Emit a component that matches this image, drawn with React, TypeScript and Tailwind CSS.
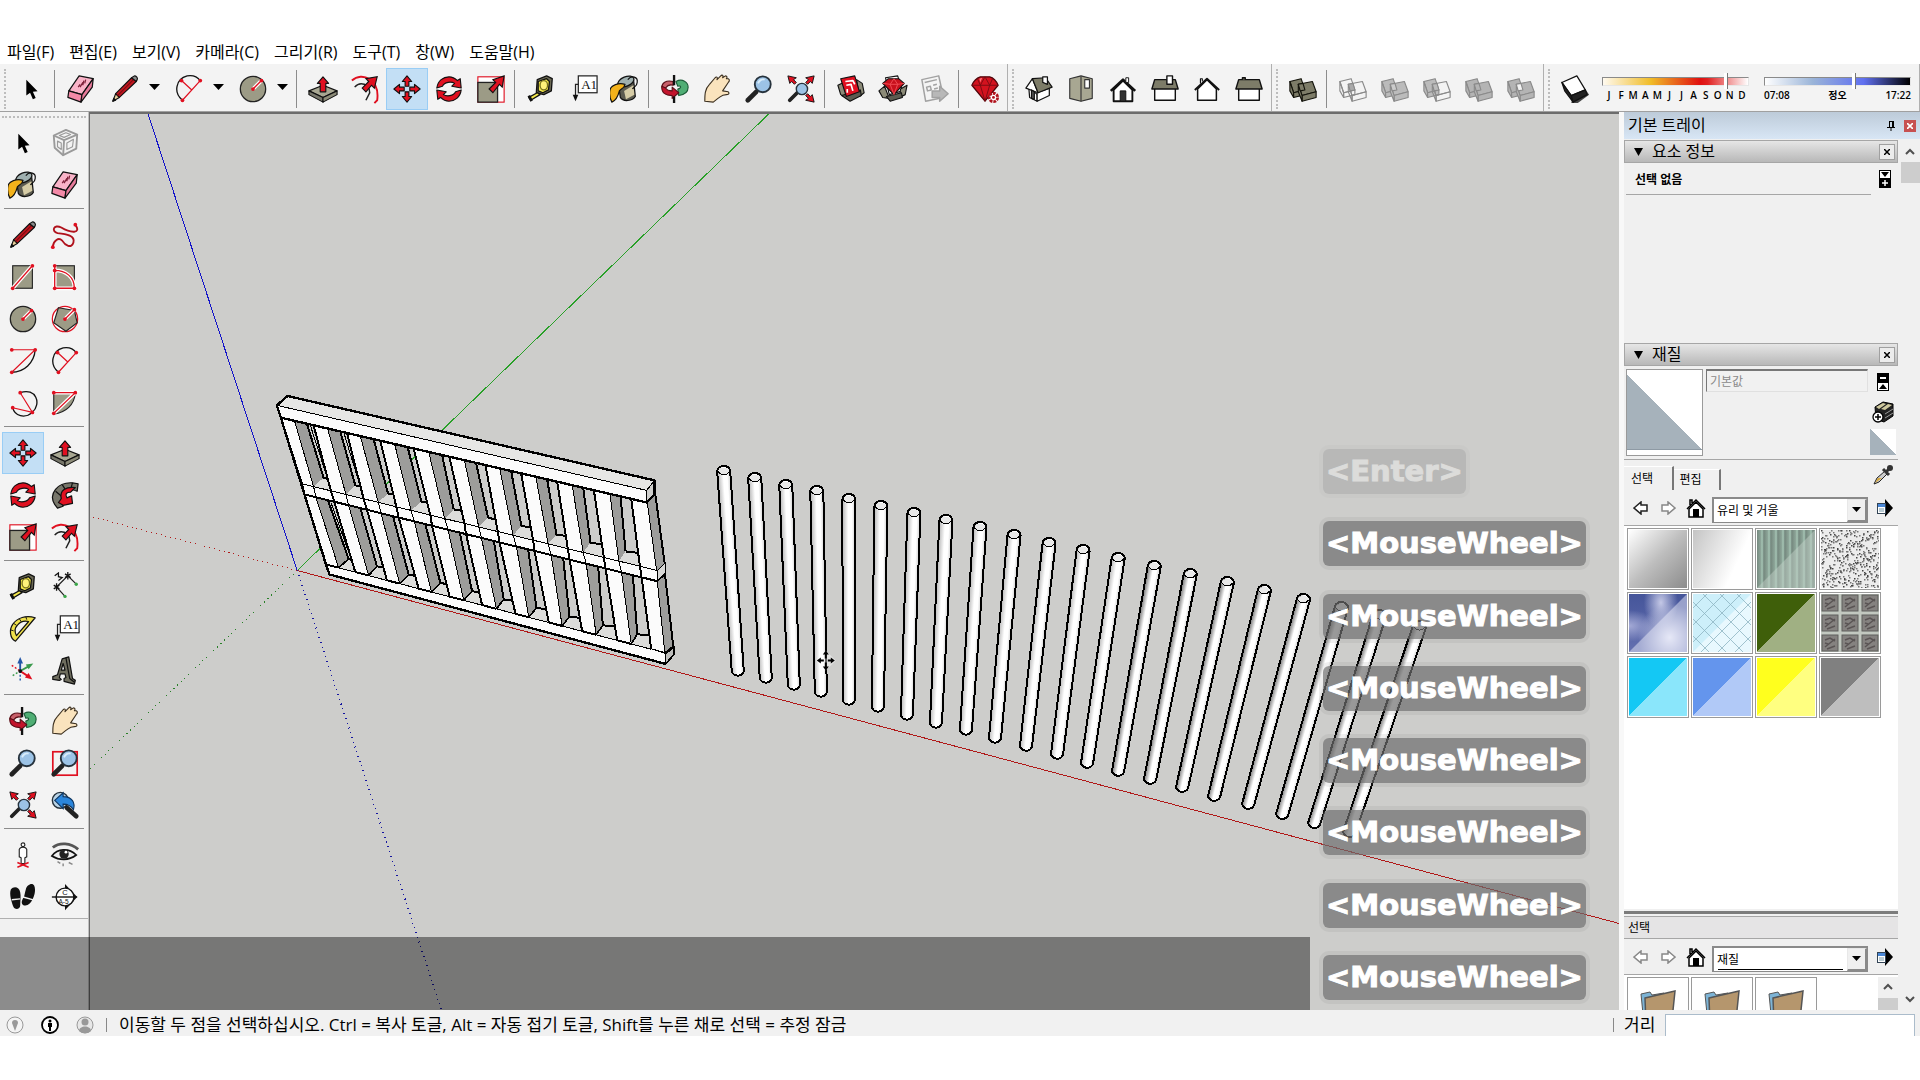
import { useState, type ReactNode } from "react";
import clsx from "clsx";

const RED = "#e01020";
const OLIVE = "#9c9b86";

const ROTATE_ARROW = "M3 15C4 7 10 3 16 3C20 3 23 5 25 7L28 5L29 15L19 13L22 10C19 8 11 8 9 13Z";
const MOVE_ARROW = "M16 2L21 8H18V13H14V8H11Z";

function Dots({ points }: { points: number[][] }) {
  return (
    <>
      {points.map(([x, y]) => (
        <circle key={`${x}-${y}`} cx={x} cy={y} r="2" fill={RED} />
      ))}
    </>
  );
}

function Lens({ small = false }: { small?: boolean }) {
  return small ? (
    <>
      <path d="M4 28L12 20" stroke="#222" strokeWidth="4" strokeLinecap="round" />
      <circle cx="17" cy="16" r="6" fill="#9cc3e6" stroke="#26323c" strokeWidth="1.5" />
    </>
  ) : (
    <>
      <path d="M4 28L13 19" stroke="#222" strokeWidth="5" strokeLinecap="round" />
      <circle cx="20" cy="11" r="8.5" fill="#9cc3e6" stroke="#26323c" strokeWidth="2" />
      <path d="M15 10C16 7 19 5 22 6" fill="none" stroke="#d8ecfa" strokeWidth="2" />
    </>
  );
}

function Solid({ a, b, c, wireA, wireB }: { a: string; b: string; c: string; wireA?: boolean; wireB?: boolean }) {
  const stroke = a === "#7d7c68" ? "#14140c" : "#8a8a8a";
  return (
    <g stroke={stroke} strokeWidth="1.2" strokeLinejoin="round">
      <path d="M2 8L14 5L18 17L6 20Z" fill={wireA ? "none" : a} />
      <path d="M2 8L6 20V25L2 18Z" fill={wireA ? "none" : a} />
      <path d="M6 20L18 17V22L6 25Z" fill={wireA ? "none" : a} />
      <path d="M11 11L26 8L30 19L15 23Z" fill={wireB ? "none" : b} />
      <path d="M15 23L30 19V25L15 29Z" fill={wireB ? "none" : b} />
      <path d="M11 11L15 23V29L11 19Z" fill={wireB ? "none" : b} />
      <path d="M11 11L16 10L18 17L13 18Z" fill={c} />
    </g>
  );
}

const ICONS: Record<string, ReactNode> = {
  select: <path d="M11 6V23L15 20L18 27L21 25.500L18 19L23 18.500Z" fill="#000" />,
  component: (
    <g fill="none" stroke="#9a9a9a" strokeWidth="2" strokeLinejoin="round">
      <path d="M4 8L17 2L29 7L28 22L14 29L5 21Z" />
      <path d="M4 8L15 13L29 7M15 13L14 29" />
      <path d="M8 14L12 16V23L8 20ZM18 16L25 12L24 20L18 23ZM10 8L17 5L22 7L15 10Z" strokeWidth="1.2" />
    </g>
  ),
  paint: (
    <g stroke="#111" strokeWidth="1.3" strokeLinejoin="round">
      <path d="M9 10L11 25C14 30 24 29 27 24L25 5Z" fill="#5c5b50" />
      <path d="M15 18L25 12L26 22L17 27Z" fill="#d6cca6" stroke="none" />
      <ellipse cx="17" cy="8" rx="9" ry="5" transform="rotate(-22 17 8)" fill="#9fb0b0" />
      <path d="M19 6C23 1 30 3 29 9C29 13 25 14 24 16" fill="none" />
      <path d="M16 11C9 9 1 12 0 17C-1 21 0 26 2 30C7 28 9 22 10 18C12 15 15 16 16 11Z" fill="#f3b21b" />
    </g>
  ),
  eraser: (
    <g stroke="#111" strokeWidth="1.3" strokeLinejoin="round">
      <path d="M14 2L29 5L17 22L3 18Z" fill="#f9b3c8" />
      <path d="M3 18L17 22L16 30L2 25Z" fill="#f48aa8" />
      <path d="M17 22L29 5L28 14L16 30Z" fill="#e77a9a" />
      <path d="M13 14L15 11M15 14L18 9M18 12L19 7M20 10L21 6" stroke="#7c2038" />
    </g>
  ),
  pencil: (
    <g stroke="#111" strokeWidth="1.2" strokeLinejoin="round">
      <path d="M3 29L6 21L10 25Z" fill="#e8cf9a" />
      <path d="M6 21L23 4L28 8L10 25Z" fill="#c2161f" />
      <path d="M8 23L25 6" stroke="#7a0c12" />
      <path d="M23 4L26 2C28 2 30 4 29 6L28 8Z" fill="#8a8a8a" />
      <path d="M3 29L4 26L6 28Z" fill="#111" />
    </g>
  ),
  arc: (
    <>
      <path d="M9 28C-1 20 2 5 14 2C20 1 25 3 28 7" fill="none" stroke="#111" strokeWidth="1.4" />
      <path d="M8 7L19 17M28 7L9 28" stroke={RED} strokeWidth="1.3" />
      <Dots points={[[8, 7], [28, 7], [9, 28]]} />
    </>
  ),
  circle: (
    <>
      <circle cx="16" cy="16" r="13.500" fill={OLIVE} stroke="#222" strokeWidth="1.400" />
      <path d="M16 16L25 7" stroke="#fff" strokeWidth="4" />
      <path d="M16 16L25 7" stroke={RED} strokeWidth="1.400" />
      <Dots points={[[16, 16], [25, 7]]} />
    </>
  ),
  freehand: (
    <>
      <path d="M27 5C34 15 22 14 12 8C4 4 1 12 8 14C18 15 27 17 25 24C23 31 16 27 13 22C9 18 4 22 3 28" fill="none" stroke="#b0121c" strokeWidth="2" />
      <Dots points={[[27, 5], [3, 29]]} />
    </>
  ),
  rectangle: (
    <>
      <rect x="5" y="4" width="21" height="24" fill={OLIVE} stroke="#222" strokeWidth="1.200" />
      <path d="M5 28L26 4" stroke="#fff" strokeWidth="4" />
      <path d="M5 28L26 4" stroke={RED} strokeWidth="1.400" />
      <Dots points={[[5, 28], [26, 4]]} />
    </>
  ),
  rotatedRect: (
    <>
      <rect x="5" y="4" width="21" height="24" fill={OLIVE} stroke="#222" strokeWidth="1.200" />
      <path d="M5 9C17 9 26 16 26 28H5V4" fill="none" stroke="#fff" strokeWidth="4" />
      <path d="M5 9C17 9 26 16 26 28H5V4" fill="none" stroke={RED} strokeWidth="1.400" />
      <Dots points={[[5, 4], [5, 9], [5, 28], [26, 28]]} />
    </>
  ),
  polygon: (
    <>
      <circle cx="16" cy="16" r="13.500" fill="#fff" stroke={RED} strokeWidth="1.300" />
      <path d="M9 4L26 7L29 20L17 29L4 20Z" fill={OLIVE} stroke="#222" strokeWidth="1.200" />
      <path d="M16 16L26 6" stroke="#fff" strokeWidth="4" />
      <path d="M16 16L26 6" stroke={RED} strokeWidth="1.400" />
      <Dots points={[[16, 16], [26, 6]]} />
    </>
  ),
  arcCenter: (
    <>
      <path d="M29 4C28 18 17 28 4 28" fill="none" stroke="#111" strokeWidth="1.400" />
      <path d="M4 4H29L4 28" fill="none" stroke={RED} strokeWidth="1.200" />
      <Dots points={[[4, 4], [29, 4], [4, 28]]} />
    </>
  ),
  arc3: (
    <>
      <path d="M13 5C30 -1 36 17 26 26C18 33 7 30 5 21" fill="none" stroke="#111" strokeWidth="1.400" />
      <path d="M13 5L26 26L5 21" fill="none" stroke={RED} strokeWidth="1.200" />
      <Dots points={[[13, 5], [5, 21], [26, 26]]} />
    </>
  ),
  pie: (
    <>
      <path d="M4 5H27C26 18 17 26 4 28Z" fill={OLIVE} stroke="#222" strokeWidth="1.200" />
      <path d="M4 5H27L4 27" fill="none" stroke="#fff" strokeWidth="4" />
      <path d="M4 5H27L4 27" fill="none" stroke={RED} strokeWidth="1.300" />
      <Dots points={[[4, 5], [27, 5], [4, 27]]} />
    </>
  ),
  move: (
    <g fill={RED} stroke="#111" strokeWidth="1.200" strokeLinejoin="round">
      <path d={MOVE_ARROW} />
      <path d={MOVE_ARROW} transform="rotate(90 16 16)" />
      <path d={MOVE_ARROW} transform="rotate(180 16 16)" />
      <path d={MOVE_ARROW} transform="rotate(270 16 16)" />
    </g>
  ),
  pushPull: (
    <g stroke="#111" strokeWidth="1.200" strokeLinejoin="round">
      <path d="M1 18L16 12L31 18L16 25Z" fill="#a8a792" />
      <path d="M1 18L16 25V30L1 22Z" fill="#77766a" />
      <path d="M16 25L31 18V22L16 30Z" fill="#8c8b78" />
      <path d="M16 3L22 10H19V19H13V10H10Z" fill={RED} />
    </g>
  ),
  rotate: (
    <g fill={RED} stroke="#111" strokeWidth="1.200" strokeLinejoin="round">
      <path d={ROTATE_ARROW} />
      <path d={ROTATE_ARROW} transform="rotate(180 16 16)" />
    </g>
  ),
  followMe: (
    <g stroke="#111" strokeWidth="1.300" strokeLinejoin="round">
      <path d="M5 26C-2 15 8 2 24 3L30 4L29 12C20 8 12 12 12 22L14 28L8 30Z" fill="#77766a" />
      <path d="M6 12L12 17M13 5L17 11M24 3L22 10" />
      <path d="M12 20C10 11 17 7 27 8L22 13C17 13 16 15 18 19L23 17L24 25L14 27L9 24Z" fill={RED} />
    </g>
  ),
  scale: (
    <>
      <rect x="2" y="3" width="28" height="27" fill="#fff" stroke={RED} strokeWidth="1.200" />
      <rect x="2" y="9" width="21" height="21" fill={OLIVE} stroke="#222" strokeWidth="1.400" />
      <path d="M14 16L21 9L18 6L30 2L28 14L25 11L18 20Z" fill={RED} stroke="#111" strokeWidth="1.200" />
    </>
  ),
  offset: (
    <>
      <path d="M2 7C13 -3 32 6 29 28L26 31" fill="none" stroke={RED} strokeWidth="2" />
      <path d="M5 14C11 7 21 11 21 20L17 28" fill="none" stroke="#222" strokeWidth="1.600" />
      <path d="M13 15L20 8L17 5L29 3L26 15L23 12L17 19Z" fill={RED} stroke="#111" strokeWidth="1.200" />
    </>
  ),
  tape: (
    <g stroke="#111" strokeWidth="1.400" strokeLinejoin="round">
      <path d="M12 6L22 2L28 5L27 18L19 22L11 20Z" fill="#6c6a55" />
      <path d="M13 8L22 5L25 8L24 17L18 20L13 18Z" fill="#f4e84a" />
      <ellipse cx="19" cy="12" rx="4" ry="5" fill="#fff27a" stroke="#77711f" />
      <path d="M12 20L15 22L5 28L3 25Z" fill="#f4e84a" />
      <path d="M3 23L6 29" strokeWidth="3" />
    </g>
  ),
  dimension: (
    <>
      <path d="M7 16L19 4M7 16L16 26M19 4L28 13" stroke="#222" strokeWidth="1.200" />
      <path d="M4 14L10 18M4 18L10 14M7 12V20M16 2L22 6M16 6L22 2M19 0V8" stroke="#111" strokeWidth="1.400" />
      <path d="M5 4L9 1L9 5L13 6L9 9" fill="none" stroke="#111" strokeWidth="1.300" />
      <circle cx="16" cy="26" r="1.800" fill="#3aa648" />
      <circle cx="28" cy="13" r="1.800" fill="#3aa648" />
    </>
  ),
  protractor: (
    <g stroke="#111" strokeWidth="1.300" strokeLinejoin="round">
      <path d="M29 4L8 29C2 26 1 17 5 11C10 4 19 1 29 4Z" fill="#efe04c" />
      <path d="M22 8L9 23C7 19 7 15 10 12C13 8 18 7 22 8Z" fill="#f3f3f3" />
      <path d="M3 17L6 18M6 10L9 12M12 5L14 8M19 3L20 6" strokeWidth="1" />
    </g>
  ),
  text: (
    <>
      <rect x="11" y="2" width="20" height="18" fill="#fff" stroke="#222" strokeWidth="1.300" />
      <text x="14" y="16" fontSize="14" fontFamily="Liberation Serif" fill="#111">A1</text>
      <path d="M11 11H8V24" fill="none" stroke="#222" strokeWidth="1.300" />
      <path d="M5 22H11L8 29Z" fill="#111" />
    </>
  ),
  axes: (
    <>
      <path d="M13 16V27" stroke="#2356a8" strokeWidth="1.500" strokeDasharray="2 2" />
      <path d="M4 10L13 16" stroke={RED} strokeWidth="1.500" strokeDasharray="2 2" />
      <path d="M5 21L13 16" stroke="#3a9a4c" strokeWidth="1.500" strokeDasharray="2 2" />
      <path d="M13 16V5" stroke="#2356a8" strokeWidth="2" />
      <path d="M13 16L22 11" stroke="#3a9a4c" strokeWidth="2" />
      <path d="M13 16L22 22" stroke={RED} strokeWidth="2" />
      <path d="M13 1L16 8H10Z" fill="#2356a8" />
      <path d="M27 8L22 14L19 9Z" fill="#3a9a4c" />
      <path d="M26 25L18 23L22 18Z" fill={RED} />
      <circle cx="13" cy="16" r="2" fill="#111" />
    </>
  ),
  text3d: (
    <g stroke="#111" strokeWidth="1.300" strokeLinejoin="round">
      <path d="M3 22L8 20L13 3L20 1L24 24L27 26L26 30L15 27L15 24L17 23L16 19L11 19L10 23L12 25L10 26L3 25Z" fill="#6f6e5f" />
      <path d="M12 15H16L14 8Z" fill="#efefef" />
      <path d="M17 2L21 24L26 28" fill="none" />
    </g>
  ),
  orbit: (
    <g strokeLinejoin="round">
      <path d="M17 8C24 4 30 9 30 14C30 19 26 22 20 23L19 16C23 15 23 12 19 13Z" fill="#4fae74" stroke="#1c5c38" strokeWidth="1.200" />
      <path d="M14 8C6 6 2 10 2 14L6 15C8 12 11 11 14 12Z" fill="#c8606a" stroke="#5a1018" strokeWidth="1.200" />
      <path d="M2 13C1 20 6 23 13 23V26L20 20L13 14V18C9 18 7 17 6 15Z" fill="#c3142c" stroke="#5a1018" strokeWidth="1.200" />
      <path d="M15 1V12M15 24V31" stroke="#111" strokeWidth="2.500" />
    </g>
  ),
  pan: (
    <path
      d="M3 29C3 22 3 16 8 11L14 4C16 2 17 4 16 6L20 2C22 0 23 2 22 4L25 2C27 2 27 4 26 5L28 5C30 6 29 8 28 9L22 18L28 19C30 21 28 22 26 22C21 22 20 24 17 26L12 30Z"
      fill="#fae3bd"
      stroke="#3c3020"
      strokeWidth="1.200"
      strokeLinejoin="round"
    />
  ),
  zoom: <Lens />,
  zoomWindow: (
    <>
      <rect x="3" y="4" width="26" height="25" fill="none" stroke={RED} strokeWidth="1.800" />
      <Lens />
    </>
  ),
  zoomExtents: (
    <>
      <g fill={RED} stroke="#111" strokeWidth="1">
        <path d="M2 2L11 4L8 6L11 9L9 11L6 8L4 10Z" />
        <path d="M30 2L28 10L26 8L23 11L21 9L24 6L21 4Z" />
        <path d="M30 30L21 28L24 26L21 23L23 21L26 24L28 22Z" />
      </g>
      <Lens small />
    </>
  ),
  previous: (
    <>
      <circle cx="11" cy="11" r="8.500" fill="#b9d3e6" stroke="#26323c" strokeWidth="1.500" />
      <path d="M5 11L14 3V7C24 7 27 14 25 21C22 16 19 15 14 15V20Z" fill="#2b86dc" stroke="#0e3560" strokeWidth="1.200" />
      <path d="M18 19L28 28" stroke="#222" strokeWidth="5" strokeLinecap="round" />
    </>
  ),
  positionCamera: (
    <>
      <circle cx="16" cy="5" r="2" fill="#fff" stroke="#222" strokeWidth="1.200" />
      <path d="M12 10C13 7 19 7 20 10V18L18 19V25H14V19L12 18Z" fill="#fff" stroke="#222" strokeWidth="1.200" />
      <path d="M10 24L22 29M22 24L10 29" stroke={RED} strokeWidth="1.600" />
    </>
  ),
  lookAround: (
    <>
      <path d="M3 8C10 2 22 3 30 10" fill="none" stroke="#555" strokeWidth="3" />
      <path d="M2 17C8 9 20 8 28 16C20 22 10 22 2 17Z" fill="#eee" stroke="#111" strokeWidth="1.800" />
      <circle cx="15" cy="15" r="5" fill="#222" />
      <circle cx="17" cy="13" r="1.500" fill="#fff" />
      <path d="M8 23L11 25M14 25V28M20 24L24 26" stroke="#888" strokeWidth="1.500" />
    </>
  ),
  walk: (
    <>
      <g fill="#111">
        <path d="M3 8C6 4 12 5 13 11C14 15 13 21 13 25C13 29 8 30 6 27C4 22 1 13 3 8Z" />
        <path d="M19 8C20 3 26 0 28 4C30 9 28 15 26 19C24 23 21 26 17 25C13 23 15 19 17 16C18 13 18 11 19 8Z" />
      </g>
      <path d="M4 19L13 18M16 16L27 19" stroke="#f3f3f3" strokeWidth="1.500" />
    </>
  ),
  section: (
    <>
      <path d="M16 2L29 16L16 30Z" fill="#111" />
      <circle cx="16" cy="16" r="9.500" fill="#fff" stroke="#111" strokeWidth="1.500" />
      <path d="M2 16H29" stroke="#111" strokeWidth="1.500" />
      <text x="13" y="14" fontSize="8" fontFamily="Liberation Sans" fill="#111">C</text>
      <text x="9" y="23" fontSize="7" fontFamily="Liberation Sans" fill="#111">A-5</text>
    </>
  ),
  warehouse: (
    <g stroke="#111" strokeWidth="1.200" strokeLinejoin="round">
      <path d="M2 12L8 9L12 26L5 22Z" fill="#8c8b78" />
      <path d="M22 6L28 10L30 20L25 24Z" fill="#8c8b78" />
      <path d="M6 23L26 17L27 23L15 29Z" fill="#5c5b50" />
      <path d="M5 5L20 2L25 19L11 24Z" fill={RED} />
      <path d="M10 8L18 7L20 11M11 12L16 11L18 18M12 16V20" fill="none" stroke="#fff" strokeWidth="1.800" />
    </g>
  ),
  extension: (
    <g stroke="#111" strokeWidth="1.200" strokeLinejoin="round">
      <path d="M8 4L21 2L26 18L12 22Z" fill="#fff" />
      <path d="M1 18L7 13L12 26L5 25Z" fill="#8c8b78" />
      <path d="M24 16L31 12L29 22L23 25Z" fill="#8c8b78" />
      <path d="M9 24L25 20L26 25L13 29Z" fill="#5c5b50" />
      <path d="M5 10L11 5H22L28 10L17 22Z" fill="#c8101c" />
      <path d="M5 10L13 11L17 22L21 11L28 10M13 11L17 5L21 11Z" fill="none" stroke="#f04c54" strokeWidth="1" />
    </g>
  ),
  layout: (
    <g stroke="#a2a2a2" strokeWidth="1.600" strokeLinejoin="round">
      <path d="M2 6L20 2L25 25L6 29Z" fill="#f4f4f4" />
      <path d="M5 9L18 6M7 14L11 13L12 17L8 18ZM14 12L18 11M15 16L19 15" fill="none" />
      <path d="M13 18H21V13L30 21L21 29V25H13Z" fill="#b8b8b8" />
    </g>
  ),
  ruby: (
    <>
      <g strokeLinejoin="round">
        <path d="M2 12C4 7 8 4 11 3H21C25 4 28 7 30 12L16 29Z" fill="#d3121e" stroke="#4d050a" strokeWidth="1.300" />
        <path d="M2 12H30M8 5L11 12L16 29L21 12L24 5M11 12L16 3L21 12" fill="none" stroke="#7a0c12" strokeWidth="1" />
        <path d="M10 5L13 4L11 9Z" fill="#ff7378" />
      </g>
      <circle cx="25" cy="25" r="4.500" fill="#fff" stroke="#b0121c" strokeWidth="3" strokeDasharray="3 1" />
      <circle cx="25" cy="25" r="1.500" fill="#b0121c" />
    </>
  ),
  iso: (
    <g stroke="#111" strokeWidth="1.300" strokeLinejoin="round">
      <path d="M5 13L14 22V29L6 25Z" fill="#fff" />
      <path d="M14 20L27 15V23L14 29Z" fill="#fff" />
      <path d="M2 15L9 5L15 20Z" fill="#fff" />
      <path d="M9 5L23 4L30 14L15 20Z" fill="#7d7c68" />
      <path d="M20 3H25V11L20 9Z" fill="#fff" />
      <path d="M8 17L11 19V27L8 26Z" fill="#555" />
    </g>
  ),
  top: (
    <g stroke="#333" strokeWidth="1.200" strokeLinejoin="round">
      <path d="M4 5L16 2L28 5V26L16 29L4 26Z" fill="#a8a792" />
      <path d="M16 3V29" />
      <rect x="20" y="6" width="5" height="9" fill="#fff" />
    </g>
  ),
  front: (
    <g stroke="#111" strokeLinejoin="round">
      <path d="M6 17V29H26V17L16 7Z" fill="#fff" strokeWidth="2" />
      <path d="M3 18L16 6L29 18" fill="none" strokeWidth="2.800" />
      <rect x="13" y="18" width="6" height="11" fill="#333" />
      <rect x="19" y="4" width="3" height="5" fill="#fff" />
    </g>
  ),
  right: (
    <g stroke="#111" strokeWidth="1.500" strokeLinejoin="round">
      <rect x="5" y="15" width="22" height="13" fill="#fff" />
      <path d="M5 6H27L30 16H2Z" fill="#7d7c68" />
      <rect x="18" y="2" width="6" height="9" fill="#fff" />
    </g>
  ),
  back: (
    <g stroke="#111" strokeLinejoin="round">
      <path d="M6 16V28H26V16L16 6Z" fill="#fff" strokeWidth="1.600" />
      <path d="M3 17L16 5L29 17" fill="none" strokeWidth="2" />
      <path d="M9 10V5H11V8" fill="#fff" strokeWidth="1.200" />
    </g>
  ),
  left: (
    <g stroke="#111" strokeWidth="1.500" strokeLinejoin="round">
      <rect x="5" y="15" width="22" height="13" fill="#fff" />
      <path d="M5 6H27L30 16H2Z" fill="#7d7c68" />
      <path d="M9 6V4H12V6" fill="#7d7c68" />
    </g>
  ),
  outerShell: <Solid a="#7d7c68" b="#7d7c68" c="#7d7c68" />,
  intersect: <Solid a="#f3f3f3" b="#f3f3f3" c="#aaa" wireA wireB />,
  union: <Solid a="#bbb" b="#bbb" c="#ccc" />,
  subtract: <Solid a="#bbb" b="#f3f3f3" c="#bbb" wireB />,
  trim: <Solid a="#b4b4b4" b="#b4b4b4" c="#b4b4b4" />,
  split: <Solid a="#b4b4b4" b="#b4b4b4" c="#f3f3f3" />,
  shadow: (
    <g stroke="#111" strokeLinejoin="round" strokeWidth="1.300">
      <path d="M12 31L19 31L31 22L27 16L14 24Z" fill="#444" stroke="none" />
      <path d="M2 9L18 2L27 17L12 23Z" fill="#fff" />
      <path d="M2 9L12 23L14 30L5 18Z" fill="#222" />
      <path d="M12 23L27 17L29 22L14 30Z" fill="#222" />
    </g>
  ),
};

function Icon({ name }: { name: string }) {
  return (
    <svg viewBox="0 0 32 32" className="size-[30px]" aria-hidden="true">
      {ICONS[name]}
    </svg>
  );
}

interface ToolButtonProps {
  name: string;
  active?: boolean;
  onSelect?: (name: string) => void;
}

function ToolButton({ name, active, onSelect }: ToolButtonProps) {
  return (
    <button
      type="button"
      aria-label={name}
      aria-pressed={active}
      onClick={() => onSelect?.(name)}
      className={clsx(
        "flex h-[42px] w-[42px] shrink-0 items-center justify-center border",
        active ? "border-[#99cdf5] bg-[#c3dff5]" : "border-transparent"
      )}
    >
      <Icon name={name} />
    </button>
  );
}

function DropTool({ name, onSelect }: ToolButtonProps) {
  return (
    <div className="flex shrink-0 items-center pr-1 pl-0.5">
      <ToolButton name={name} onSelect={onSelect} />
      <button type="button" aria-label={`${name} options`} className="flex h-[42px] w-4 items-center justify-center pb-1">
        <svg viewBox="0 0 11 6" className="h-1.5 w-[11px]" aria-hidden="true">
          <path d="M0 0H11L5.500 6Z" />
        </svg>
      </button>
    </div>
  );
}

function Separator() {
  return <div className="ml-0.5 mr-[5px] h-[38px] w-px shrink-0 bg-[#8c8c8c]" />;
}

function Toolbar({ children, last = false }: { children: ReactNode; last?: boolean }) {
  return (
    <div className={clsx("flex h-full items-center border-r border-[#b0b0b0] pt-0.5", last ? "flex-1" : "pr-px")}>
      <div className="flex h-full w-2.5 shrink-0 items-center justify-center">
        <div className="h-10 border-l-2 border-dotted border-[#bdbdbd]" />
      </div>
      {children}
    </div>
  );
}

const MENUS = ["파일(F)", "편집(E)", "보기(V)", "카메라(C)", "그리기(R)", "도구(T)", "창(W)", "도움말(H)"];

const TOOL_GROUPS = [
  ["pushPull", "offset", "move", "rotate", "scale"],
  ["tape", "text", "paint"],
  ["orbit", "pan", "zoom", "zoomExtents"],
  ["warehouse", "extension", "layout"],
  ["ruby"],
];

const SIDE_GROUPS = [
  ["select", "component", "paint", "eraser"],
  ["pencil", "freehand", "rectangle", "rotatedRect", "circle", "polygon", "arcCenter", "arc", "arc3", "pie"],
  ["move", "pushPull", "rotate", "followMe", "scale", "offset"],
  ["tape", "dimension", "protractor", "text", "axes", "text3d"],
  ["orbit", "pan", "zoom", "zoomWindow", "zoomExtents", "previous"],
  ["positionCamera", "lookAround", "walk", "section"],
];

const SLIDER =
  "h-[9px] w-full appearance-none border border-[#e6e6e6] border-t-[#8a8a8a] border-l-[#8a8a8a] [&::-webkit-slider-thumb]:h-4 [&::-webkit-slider-thumb]:w-1 [&::-webkit-slider-thumb]:appearance-none [&::-webkit-slider-thumb]:border-r [&::-webkit-slider-thumb]:border-[#777] [&::-webkit-slider-thumb]:bg-white";

function ShadowSliders() {
  return (
    <div className="flex flex-1 gap-[15px] pr-2 pl-1.5">
      <div className="flex flex-1 flex-col">
        <input
          type="range"
          aria-label="month"
          defaultValue={86}
          className={clsx(SLIDER, "bg-[linear-gradient(90deg,#fffaf0,#f0bc28_33%,#e01010_67%,#e02020_72%,#fff)]")}
        />
        <div className="flex justify-between px-0.5 pt-[3px] text-[10px] leading-3 font-semibold">
          {"JFMAMJJASOND".split("").map((m, i) => (
            <span key={i} className="w-2.5 text-center">
              {m}
            </span>
          ))}
        </div>
      </div>
      <div className="flex flex-1 flex-col">
        <input
          type="range"
          aria-label="time"
          defaultValue={62}
          className={clsx(SLIDER, "bg-[linear-gradient(90deg,#fff,#9ab4d8_33%,#6070f0_68%,#000)]")}
        />
        <div className="flex justify-between pt-[3px] text-[10px] leading-3 font-semibold">
          <span>07:08</span>
          <span>정오</span>
          <span>17:22</span>
        </div>
      </div>
    </div>
  );
}

/* ---------- Model ---------- */

// Picket x positions where they meet each rail, in fence space (3 units per pixel).
const UPPER = [
  [62, 103, 140, 125, 160, 190],
  [160, 202, 240, 212, 257, 285],
  [260, 300, 340, 310, 354, 383],
  [360, 403, 442, 408, 452, 483],
  [460, 505, 545, 510, 553, 580],
  [567, 612, 647, 612, 655, 683],
  [675, 718, 752, 712, 758, 783],
  [782, 826, 860, 818, 863, 888],
  [890, 935, 968, 922, 968, 990],
  [1000, 1048, 1080, 1030, 1075, 1095],
  [1112, 1160, 1184, 1138, 1188, 1213],
];
const LOWER = [
  [133, 167, 203, 198, 235, 265],
  [222, 265, 300, 285, 325, 350],
  [320, 362, 398, 380, 418, 445],
  [415, 462, 495, 475, 513, 540],
  [515, 563, 598, 568, 610, 635],
  [617, 663, 700, 665, 708, 730],
  [717, 768, 803, 765, 805, 828],
  [822, 872, 908, 865, 905, 927],
  [927, 977, 1013, 965, 1007, 1027],
  [1035, 1083, 1117, 1070, 1112, 1130],
  [1143, 1190, 1213, 1172, 1213, 1238],
];

const railTop = (x: number) => 112 + 0.2317 * (x - 62);
const midTop = (x: number) => 310 + 0.2441 * (x - 125);
const midBottom = (x: number) => 342 + 0.246 * (x - 133);
const baseTop = (x: number) => 552 + 0.2606 * (x - 198);

interface PicketProps {
  xs: number[];
  next?: number[];
  top: (x: number) => number;
  bottom: (x: number) => number;
  foot?: boolean;
}

function Picket({ xs, next, top, bottom, foot }: PicketProps) {
  const [a, b, c, d, e, f] = xs;
  const fy = bottom(f) - 34;
  return (
    <g>
      {next && (
        <>
          <path d={`M${e} ${bottom(e)}L${f} ${fy}L${next[3] - 8} ${fy + 4}L${next[3]} ${bottom(next[3])}Z`} fill="#dcdcda" />
          <path d={`M${f} ${fy}L${next[3] - 8} ${fy + 4}`} stroke="#000" strokeWidth="6" />
        </>
      )}
      <path d={`M${b} ${top(b)}L${c} ${top(c)}L${f} ${fy}L${e} ${bottom(e)}Z`} fill="#9d9d9b" />
      <path d={`M${a} ${top(a)}L${b} ${top(b)}L${e} ${bottom(e)}L${d} ${bottom(d)}Z`} fill="#fbfbfb" />
      <path d={`M${b} ${top(b)}L${e} ${bottom(e)}`} stroke="#000" strokeWidth="3" />
      <path d={`M${c} ${top(c)}L${f} ${fy}M${a} ${top(a)}L${d} ${bottom(d)}`} stroke="#000" strokeWidth="6" />
      {foot && <path d={`M${d} ${bottom(d)}L${e} ${bottom(e)}L${f} ${fy}`} fill="none" stroke="#000" strokeWidth="5" />}
    </g>
  );
}

function Fence() {
  return (
    <g transform="translate(261 381) scale(.3333)" strokeLinejoin="round">
      {UPPER.slice(0, 10).map((xs, i) => (
        <Picket key={i} xs={xs} next={UPPER[i + 1]} top={railTop} bottom={midTop} />
      ))}
      <path d="M1112 355L1160 366L1188 570L1138 558Z" fill="#fbfbfb" />
      <path d="M1160 366L1184 340L1213 548L1188 570Z" fill="#9d9d9b" />
      <path d="M1112 355L1138 558M1184 340L1213 555" stroke="#000" strokeWidth="6" />
      <path d="M1160 366L1188 570" stroke="#000" strokeWidth="3" />
      {LOWER.slice(0, 10).map((xs, i) => (
        <Picket key={i} xs={xs} next={LOWER[i + 1]} top={midBottom} bottom={baseTop} foot />
      ))}
      <path d="M1143 590L1190 602L1213 818L1172 806Z" fill="#fbfbfb" />
      <path d="M1190 602L1213 580L1238 800L1213 818Z" fill="#9d9d9b" />
      <path d="M1143 590L1172 806L1213 818L1238 798L1213 580" fill="none" stroke="#000" strokeWidth="6" />
      <path d="M1190 602L1213 818" stroke="#000" strokeWidth="3" />
      {/* slivers of the back edges seen between the first pickets */}
      <path d="M150 134L201 292M251 158L298 312M212 366L272 534" stroke="#000" strokeWidth="3" />

      <path d="M125 310L1190 570V602L133 342Z" fill="#fbfbfb" stroke="#000" strokeWidth="3" />
      <path d="M1190 570L1213 548L1215 580L1190 602Z" fill="#d8d8d6" stroke="#000" strokeWidth="3" />
      <path d="M133 342L1190 602L1213 580" fill="none" stroke="#000" strokeWidth="6" />
      {UPPER.slice(0, 11).map((xs, i) => (
        <path key={i} d={`M${xs[3]} ${midTop(xs[3])}L${LOWER[i][0]} ${midBottom(LOWER[i][0])}`} stroke="#000" strokeWidth="6" />
      ))}
      {UPPER.slice(0, 10).map((xs, i) => (
        <path key={i} d={`M${xs[4]} ${midTop(xs[4])}L${LOWER[i][1]} ${midBottom(LOWER[i][1])}`} stroke="#000" strokeWidth="3" />
      ))}

      <path d="M198 555L235 562L1172 806L1215 820V850L208 582Z" fill="#fbfbfb" />
      <path d="M235 562L1172 806" stroke="#000" strokeWidth="3" />
      <path d="M1215 820L1240 798V822L1215 850Z" fill="#bdbdbb" stroke="#000" strokeWidth="5" />
      <path d="M62 112L198 555L208 582L1215 850" fill="none" stroke="#000" strokeWidth="7" />
      {LOWER.slice(0, 10).map(([, , , d, e], i) => (
        <path key={i} d={`M${d} ${baseTop(d)}L${e} ${baseTop(e)}`} stroke="#000" strokeWidth="6" />
      ))}

      <path d="M50 75L82 47L1182 300L1158 330Z" fill="#e6e6e4" stroke="#000" strokeWidth="3" />
      <path d="M50 75L1158 330V366L62 112Z" fill="#fbfbfb" stroke="#000" strokeWidth="3" />
      <path d="M1158 330L1182 300L1184 340L1158 366Z" fill="#cfcfcd" stroke="#000" strokeWidth="3" />
      <path d="M1184 340L1158 366L62 112L50 75L82 47L1182 300V340" fill="none" stroke="#000" strokeWidth="7" />
    </g>
  );
}

// [top x, top y, bottom x, bottom y]
const POLES = [
  [724, 472, 738, 671], [755, 479, 766, 678], [786, 486, 794, 685], [817, 492, 821, 692], [849, 500, 849, 700],
  [881, 507, 878, 707], [914, 514, 907, 715], [946, 521, 936, 723], [980, 528, 966, 730], [1014, 536, 995, 738],
  [1049, 544, 1026, 746], [1083, 551, 1057, 754], [1118, 559, 1087, 763], [1154, 567, 1118, 771], [1190, 575, 1150, 779],
  [1227, 583, 1182, 787], [1264, 591, 1214, 796], [1303, 600, 1248, 804], [1341, 608, 1282, 814], [1379, 616, 1314, 823],
  [1419, 627, 1349, 832],
];

function Pole({ pole, index }: { pole: number[]; index: number }) {
  const [x1, y1, x2, y2] = pole;
  const len = Math.hypot(x2 - x1, y2 - y1);
  const nx = (y2 - y1) / len;
  const ny = -(x2 - x1) / len;
  const shade = index > 12 ? "#7c7c7c" : "#bdbdbd";
  return (
    <g stroke="#000">
      <linearGradient id={`pole${index}`} gradientUnits="userSpaceOnUse" x1={x1 - nx * 6} y1={y1 - ny * 6} x2={x1 + nx * 6} y2={y1 + ny * 6}>
        <stop offset="0" stopColor={shade} />
        <stop offset=".45" stopColor="#fff" />
        <stop offset=".75" stopColor="#fff" />
        <stop offset="1" stopColor="#d4d4d4" />
      </linearGradient>
      <path
        d={`M${x1 - nx * 6.5} ${y1 - ny * 6.5}A6.500 5.500 0 0 1 ${x1 + nx * 6.5} ${y1 + ny * 6.5}L${x2 + nx * 6} ${y2 + ny * 6}A6 5 0 0 1 ${x2 - nx * 6} ${y2 - ny * 6}Z`}
        fill={`url(#pole${index})`}
        strokeWidth="2"
      />
      <ellipse cx={x1} cy={y1} rx="5.500" ry="3.500" fill="#e8e8e8" stroke="none" />
      <path d={`M${x1 - 6} ${y1}Q${x1} ${y1 + 7} ${x1 + 6} ${y1}`} fill="none" strokeWidth="1" />
    </g>
  );
}

function Model() {
  return (
    <svg viewBox="91 115 1528 895" preserveAspectRatio="xMinYMin slice" className="absolute inset-0 size-full" shapeRendering="crispEdges" aria-label="모델">
      <path d="M148 112L298 571" stroke="#1414c8" />
      <path d="M772 112L298 571" stroke="#28a028" />
      <path d="M298 571L1620 924" stroke="#b01818" />
      <g strokeDasharray="1 4">
        <path d="M298 571L442 1010" stroke="#1414a0" strokeWidth="1.500" />
        <path d="M298 571L88 772" stroke="#288028" />
        <path d="M298 571L88 516" stroke="#b01818" />
      </g>
      <Fence />
      {POLES.map((pole, i) => (
        <Pole key={i} pole={pole} index={i} />
      ))}
      <g transform="translate(826 661)" shapeRendering="auto">
        <path d="M0 -10L10 0L0 10L-10 0Z" fill="#fff" opacity=".4" />
        <path d="M0 -10L3 -6H1V-2H-1V-6H-3ZM0 10L3 6H1V2H-1V6H-3ZM-9 0L-5 -3V-1H-2V1H-5V3ZM9 0L5 -3V-1H2V1H5V3Z" fill="#000" />
      </g>
    </svg>
  );
}

const KEYS = ["<Enter>", ...Array<string>(7).fill("<MouseWheel>")];

function KeyOverlay() {
  return (
    <div className="absolute bottom-2.5 left-[1233px] flex h-[551px] flex-col items-start justify-between">
      {KEYS.map((key, i) => (
        <kbd
          key={i}
          className={clsx(
            "flex h-[45px] items-center rounded-md bg-[#6e6e6e]/70 px-[3px] font-['DejaVu_Sans',sans-serif] text-[29px] leading-none font-bold text-white shadow-[0_0_0_4px_rgba(120,120,120,0.12)] [-webkit-text-stroke:1px_white]",
            i === 0 && "opacity-30"
          )}
        >
          {key}
        </kbd>
      ))}
    </div>
  );
}

/* ---------- Tray ---------- */

function SectionHeader({ title }: { title: string }) {
  return (
    <div className="flex h-[23px] shrink-0 items-center border border-[#a6a6a6] bg-linear-to-b from-[#e6e6e6] to-[#b8b8b8] pr-0.5 pl-[9px]">
      <svg viewBox="0 0 9 8" className="h-2 w-[9px]" aria-hidden="true">
        <path d="M0 0H9L4.500 8Z" />
      </svg>
      <h2 className="flex-1 pb-0.5 pl-[9px] text-base leading-5">{title}</h2>
      <button type="button" aria-label={`${title} 닫기`} className="flex size-4 items-center justify-center border border-[#a0a0a0] bg-[#ececec]">
        <svg viewBox="0 0 6 6" className="size-1.5" aria-hidden="true">
          <path d="M0 0L6 6M6 0L0 6" stroke="#000" strokeWidth="1.500" />
        </svg>
      </button>
    </div>
  );
}

function ToggleIcon({ open }: { open?: boolean }) {
  return (
    <svg viewBox="0 0 12 18" className="h-[18px] w-3" aria-hidden="true">
      <rect x=".5" y=".5" width="11" height="17" fill="#fff" stroke="#000" />
      {open ? (
        <path d="M0 0H12V10H0ZM3 4V6H9V4ZM6 11L10 16H2Z" fillRule="evenodd" />
      ) : (
        <>
          <path d="M2 2H10L6 7ZM0 8H12V18H0Z" />
          <path d="M6 10V16M3 13H9" stroke="#fff" strokeWidth="1.500" />
        </>
      )}
    </svg>
  );
}

function NavRow({ label, options, dim }: { label: string; options: string[]; dim?: boolean }) {
  return (
    <div className="flex h-9 shrink-0 items-center border-b border-[#a6a6a6] pl-[9px]">
      <button type="button" aria-label="뒤로" className="w-[27px]">
        <svg viewBox="0 0 16 14" className="h-3.5 w-4" aria-hidden="true">
          <path d="M1 7L8 1V4H14V10H8V13Z" fill="#fff" stroke={dim ? "#888" : "#222"} strokeWidth="1.500" />
        </svg>
      </button>
      <button type="button" aria-label="앞으로" className="w-[26px]">
        <svg viewBox="0 0 16 14" className="h-3.5 w-4" aria-hidden="true">
          <path d="M15 7L8 1V4H2V10H8V13Z" fill="#fff" stroke="#888" strokeWidth="1.500" />
        </svg>
      </button>
      <button type="button" aria-label="홈" className="w-[26px]">
        <svg viewBox="0 0 20 20" className="size-5" aria-hidden="true">
          <path d="M3 11V19H17V11L10 4Z" fill="#fff" stroke="#000" strokeWidth="1.500" />
          <path d="M1 11L10 2L19 11M4 7V2H6V5" fill="none" stroke="#000" strokeWidth="1.500" />
          <rect x="7" y="11" width="6" height="8" />
        </svg>
      </button>
      <div className="relative mt-1 h-[26px] w-[156px]">
        <select
          aria-label={label}
          className="size-full appearance-none border border-t-2 border-l-2 border-[#8a8a8a] bg-white pl-[3px] text-xs"
        >
          {options.map(o => (
            <option key={o}>{o}</option>
          ))}
        </select>
        {dim && <div className="pointer-events-none absolute bottom-0.5 left-1.5 h-px w-[125px] bg-black" />}
        <div className="pointer-events-none absolute top-0.5 right-px bottom-px flex w-5 items-center justify-center border border-r-2 border-b-2 border-[#8a8a8a] border-t-[#e8e8e8] border-l-[#e8e8e8] bg-[#f0f0f0]">
          <svg viewBox="0 0 9 5" className="h-[5px] w-[9px]" aria-hidden="true">
            <path d="M0 0H9L4.500 5Z" />
          </svg>
        </div>
      </div>
      <button type="button" aria-label="세부 정보" className="pl-2">
        <svg viewBox="0 0 18 18" className="size-[18px]" aria-hidden="true">
          <path d="M6 5H9V0L17 9L9 18V13H6Z" />
          <rect x="1.500" y="4.500" width="8" height="10" fill="#fff" stroke="#345" />
          <rect x="2" y="5" width="7" height="3" fill="#4a88d8" />
          <path d="M3 10H8M3 12H8" stroke="#79a" />
        </svg>
      </button>
    </div>
  );
}

// Deterministic speckles for the textured swatches.
const SPECKLES = Array.from({ length: 420 }, (_, i) => [(i * 37 + ((i * i) % 13) * 5) % 58, (i * 23 + ((i * i) % 17) * 7) % 58]);

const MATERIALS: { name: string; fill: string; art?: ReactNode }[] = [
  { name: "회색 반투명", fill: "bg-[linear-gradient(135deg,#fff,#bdbdbd_50%,#8c8c8c)]" },
  { name: "투명", fill: "bg-[linear-gradient(115deg,#c4c4c4,#fff_70%)]" },
  {
    name: "골판 유리",
    fill: "bg-[repeating-linear-gradient(90deg,#76897f_0px,#8fa89b_4px,#a9c9b8_5px,#70827a_7px)]",
    art: <path d="M58 0V58H0Z" fill="#c6d2ca" opacity=".45" />,
  },
  {
    name: "얼룩 유리",
    fill: "bg-[#ececec]",
    art: SPECKLES.map(([x, y], i) => <rect key={i} x={x} y={y} width="1.500" height="1.500" fill={i % 3 ? "#777" : "#444"} />),
  },
  {
    name: "하늘 반사",
    fill: "bg-[radial-gradient(ellipse_at_55%_15%,#c4c8e6,transparent_38%),radial-gradient(ellipse_at_0%_55%,#a4aad6,transparent_35%),radial-gradient(ellipse_at_70%_75%,#e4e6f6,transparent_55%),linear-gradient(#45559a,#6470b0)]",
    art: <path d="M58 0V58H0Z" fill="#e8eaf8" opacity=".5" />,
  },
  {
    name: "다이아몬드 유리",
    fill: "bg-[#cdeffa]",
    art: (
      <>
        <path d="M58 0V58H0Z" fill="#e8f8fe" />
        <path d="M-2 16L16 -2M-2 33L33 -2M-2 50L50 -2M6 60L60 6M23 60L60 23M40 60L60 40M42 -2L60 16M25 -2L60 33M8 -2L60 50M-2 6L52 60M-2 23L35 60M-2 40L18 60" stroke="#8db4c2" strokeWidth=".800" />
      </>
    ),
  },
  { name: "녹색 유리", fill: "bg-[linear-gradient(135deg,#3f5f0a_50%,#a0b083_50%)]" },
  {
    name: "유리 블록",
    fill: "bg-[#c2c8c0]",
    art: [0, 1, 2].flatMap(r =>
      [0, 1, 2].map(c => (
        <g key={`${r}${c}`} transform={`translate(${c * 20 + 1} ${r * 20 + 1})`}>
          <rect width="16" height="16" fill="#858280" stroke="#5f5f5c" />
          <path d="M3 5L8 3L13 6M3 12L8 8L13 4M5 14L13 11M3 8L6 9" fill="none" stroke="#5a5454" strokeWidth="1.500" />
        </g>
      ))
    ),
  },
  { name: "하늘색", fill: "bg-[linear-gradient(135deg,#14c8f4_50%,#8ae6fb_50%)]" },
  { name: "파랑", fill: "bg-[linear-gradient(135deg,#6495ed_50%,#b1c9f7_50%)]" },
  { name: "노랑", fill: "bg-[linear-gradient(135deg,#ffff1e_50%,#ffff80_50%)]" },
  { name: "회색", fill: "bg-[linear-gradient(135deg,#808080_50%,#bebebe_50%)]" },
];

function Tray() {
  return (
    <aside className="flex w-[301px] shrink-0 flex-col border-l-[5px] border-[#f8f8f8] bg-[#f0f0f0]">
      <div className="flex h-[27px] shrink-0 items-center bg-linear-to-b from-[#bdcbd9] to-[#d8e6f5] pr-1 pl-1">
        <h1 className="flex-1 pb-0.5 text-base leading-5">기본 트레이</h1>
        <button type="button" aria-label="고정" className="mr-[9px]">
          <svg viewBox="0 0 8 10" className="h-2.5 w-2" aria-hidden="true">
            <path d="M2 0H7V6H8V7H4.500V10H3.500V7H0V6H2ZM3 1V6H5V1Z" fillRule="evenodd" />
          </svg>
        </button>
        <button type="button" aria-label="닫기" className="flex size-3 items-center justify-center bg-[#c75050]">
          <svg viewBox="0 0 6 6" className="size-1.5" aria-hidden="true">
            <path d="M0 0L6 6M6 0L0 6" stroke="#fff" strokeWidth="1.600" />
          </svg>
        </button>
      </div>

      <div className="flex min-h-0 flex-1 pt-px">
        <div className="flex min-w-0 flex-1 flex-col overflow-hidden">
          <section className="flex h-[203px] shrink-0 flex-col">
            <SectionHeader title="요소 정보" />
            <div className="flex h-8 shrink-0">
              <p className="ml-0.5 flex-1 border-b border-[#a6a6a6] pt-[9px] pl-[9px] text-xs leading-4 font-bold">선택 없음</p>
              <button type="button" aria-label="세부 정보 표시" className="flex w-[27px] items-center justify-center">
                <ToggleIcon />
              </button>
            </div>
          </section>

          <section className="flex min-h-0 flex-1 flex-col">
            <SectionHeader title="재질" />
            <div className="flex h-[94px] shrink-0 border-b border-[#a6a6a6] pt-[3px] pl-0.5">
              <div className="h-[87px] w-[77px] border border-[#9a9a9a] bg-white pt-[5px] pb-[5px]">
                <div className="size-full border-b border-[#8e9aa4] bg-[linear-gradient(to_top_right,#a6b2bb_50%,#fff_50%)]" />
              </div>
              <input
                aria-label="재질 이름"
                disabled
                defaultValue="기본값"
                className="ml-[3px] h-[23px] min-w-0 flex-1 border border-t-2 border-[#e0e0e0] border-t-[#777] border-l-[#777] bg-[#f1f1f1] px-[3px] text-xs text-[#8a8a8a]"
              />
              <div className="flex w-[30px] flex-col items-center gap-2.5 pt-1">
                <button type="button" aria-label="보조 창">
                  <ToggleIcon open />
                </button>
                <button type="button" aria-label="재질 만들기" className="size-[22px]">
                  <svg viewBox="0 0 22 22" className="size-[22px]" aria-hidden="true">
                    <path d="M3 6L11 1L21 3V15L12 21L4 18Z" fill="#222" stroke="#000" />
                    <path d="M4 6L11 2L14 3L7 8ZM9 8L16 3L20 4L13 9Z" fill="#cfc99e" />
                    <path d="M13 13L21 8M13 17L21 12" stroke="#999" />
                    <circle cx="6" cy="16" r="5" fill="#fff" stroke="#000" strokeWidth="1.300" />
                    <path d="M6 13V19M3 16H9" stroke="#000" strokeWidth="1.500" />
                  </svg>
                </button>
                <div className="-mt-1 h-[26px] w-[26px] bg-[linear-gradient(to_top_right,#a6b2bb_50%,#fff_50%)]" />
              </div>
            </div>

            <div className="flex h-[30px] shrink-0 items-end text-xs leading-4" role="tablist">
              <button type="button" role="tab" aria-selected="true" className="h-6 w-[50px] border-t border-r-2 border-white border-r-[#777] pr-3">
                선택
              </button>
              <button type="button" role="tab" aria-selected="false" className="h-[21px] w-[47px] border-t border-r-2 border-white border-r-[#777] pr-3">
                편집
              </button>
              <div className="flex-1" />
              <button type="button" aria-label="샘플 페인트" className="mr-1 self-start pt-1">
                <svg viewBox="0 0 22 22" className="size-[22px]" aria-hidden="true">
                  <path d="M2 20L5 14L13 7L15 10L7 18Z" fill="#ccc" stroke="#222" />
                  <path d="M3 19L6 14L10 14Z" fill="#d8a838" />
                  <path d="M11 5L17 11M14 8L18 4" stroke="#333" strokeWidth="3" />
                  <circle cx="18" cy="4" r="3" fill="#333" />
                </svg>
              </button>
            </div>
            <NavRow label="재질 모음" options={["유리 및 거울"]} />

            <div className="grid flex-1 grid-cols-[repeat(4,62px)] content-start gap-0.5 bg-white pt-0.5 pl-[3px]">
              {MATERIALS.map(m => (
                <button key={m.name} type="button" aria-label={m.name} className="size-[62px] border border-[#9a9a9a] bg-white p-px">
                  <div className={clsx("size-full overflow-hidden", m.fill)}>
                    {m.art && (
                      <svg viewBox="0 0 58 58" className="size-full" aria-hidden="true">
                        {m.art}
                      </svg>
                    )}
                  </div>
                </button>
              ))}
            </div>
          </section>

          <section className="flex h-[101px] shrink-0 flex-col overflow-hidden">
            <div className="mt-0.5 h-[3px] shrink-0 bg-[#7c7c7c]" />
            <div className="mt-0.5 flex h-[23px] shrink-0 items-center border-y border-[#a6a6a6] bg-[#e5e4e5] pl-1 text-xs leading-4">선택</div>
            <NavRow label="보조 모음" options={["재질"]} dim />
            <div className="flex min-h-0 flex-1 bg-white pt-0.5 pl-[3px]">
              <div className="flex flex-1 gap-0.5">
                {[0, 1, 2].map(i => (
                  <button key={i} type="button" aria-label={`폴더 ${i + 1}`} className="flex h-[62px] w-[62px] shrink-0 justify-center border border-[#9a9a9a] pt-3">
                    <svg viewBox="0 0 36 36" className="size-9" aria-hidden="true">
                      <path d="M1 4L10 2L12 5L24 3V32L4 34Z" fill="#7db4d6" stroke="#555" />
                      <path d="M5 8L35 1L32 30L6 34Z" fill="#b5966d" stroke="#555" strokeWidth="1.500" />
                    </svg>
                  </button>
                ))}
              </div>
              <div className="flex w-5 flex-col items-center bg-[#f0f0f0] pt-1.5">
                <Chevron />
                <div className="mt-2 w-full flex-1 bg-[#cdcdcd]" />
              </div>
            </div>
          </section>
        </div>

        <div className="ml-0.5 flex w-5 shrink-0 flex-col items-center pt-2 pb-[7px]">
          <Chevron />
          <div className="mt-[7px] h-[21px] w-[19px] bg-[#cdcdcd]" />
          <div className="flex-1" />
          <Chevron down />
        </div>
      </div>
    </aside>
  );
}

function Chevron({ down }: { down?: boolean }) {
  return (
    <svg viewBox="0 0 10 7" className={clsx("h-[7px] w-2.5 shrink-0", down && "rotate-180")} aria-hidden="true">
      <path d="M1 6L5 2L9 6" fill="none" stroke="#505050" strokeWidth="2" />
    </svg>
  );
}

function StatusBar() {
  return (
    <footer className="flex h-[26px] shrink-0 items-end bg-[#f1f1f1]">
      <div className="flex h-[22px] flex-1 items-center pl-1.5">
        <svg viewBox="0 0 18 18" className="size-[18px]" aria-label="위치">
          <circle cx="9" cy="9" r="8" fill="#f4f4f4" stroke="#999" />
          <path d="M9 15L6 7A3 3 0 1 1 12 7Z" fill="#999" />
        </svg>
        <svg viewBox="0 0 18 18" className="ml-[17px] size-[18px]" aria-label="저작자">
          <circle cx="9" cy="9" r="8" fill="#fff" stroke="#000" strokeWidth="1.800" />
          <path d="M7 7H11V11H10V15H8V11H7Z" />
          <circle cx="9" cy="5" r="1.500" />
        </svg>
        <svg viewBox="0 0 18 18" className="ml-[17px] size-[18px]" aria-label="사용자">
          <circle cx="9" cy="9" r="8" fill="#e8e8e8" stroke="#999" />
          <circle cx="9" cy="6" r="3.500" fill="#999" />
          <path d="M3 15C3 9 15 9 15 15C12 18 6 18 3 15Z" fill="#999" />
        </svg>
        <div className="mx-3 h-3.5 w-px bg-[#888]" />
        <p className="text-[17px] leading-5">
          이동할 두 점을 선택하십시오. Ctrl = 복사 토글, Alt = 자동 접기 토글, Shift를 누른 채로 선택 = 추정 잠금
        </p>
      </div>
      <div className="flex h-[22px] w-[307px] items-center">
        <div className="h-3.5 w-px bg-[#888]" />
        <label htmlFor="distance" className="w-[51px] pl-2.5 text-[17px] leading-5">
          거리
        </label>
        <input id="distance" className="h-[22px] min-w-0 flex-1 border border-b-0 border-[#abbccb] bg-white px-1 text-sm" />
        <div className="w-[5px]" />
      </div>
    </footer>
  );
}

export default function App() {
  const [tool, setTool] = useState("move");

  return (
    <div className="flex h-screen flex-col overflow-hidden bg-white pt-10 pb-11 font-['Open_Sans','Noto_Sans_CJK_KR',sans-serif] text-black">
      <nav className="flex h-6 shrink-0 items-center gap-[15px] pl-[7px] text-base leading-5">
        {MENUS.map(menu => (
          <button key={menu} type="button">
            {menu}
          </button>
        ))}
      </nav>

      <div className="flex h-12 shrink-0 border-b border-[#a0a0a0] bg-[#f3f3f3]">
        <Toolbar>
          <ToolButton name="select" onSelect={setTool} />
          <Separator />
          <ToolButton name="eraser" onSelect={setTool} />
          <DropTool name="pencil" onSelect={setTool} />
          <DropTool name="arc" onSelect={setTool} />
          <DropTool name="circle" onSelect={setTool} />
          {TOOL_GROUPS.map((group, i) => (
            <div key={i} className="flex items-center">
              <Separator />
              {group.map(name => (
                <ToolButton key={name} name={name} active={tool === name} onSelect={setTool} />
              ))}
            </div>
          ))}
        </Toolbar>
        <Toolbar>
          {["iso", "top", "front", "right", "back", "left"].map(name => (
            <ToolButton key={name} name={name} />
          ))}
        </Toolbar>
        <Toolbar>
          <ToolButton name="outerShell" />
          <Separator />
          {["intersect", "union", "subtract", "trim", "split"].map(name => (
            <ToolButton key={name} name={name} />
          ))}
        </Toolbar>
        <Toolbar last>
          <ToolButton name="shadow" />
          <ShadowSliders />
        </Toolbar>
      </div>

      <main className="relative flex min-h-0 flex-1">
        <div className="w-[89px] shrink-0 border-r border-[#c0c0c0] bg-[#f1f1f1]">
          <div className="border-b border-[#b0b0b0] bg-[#f3f3f3] pt-1 pl-0.5">
            <div className="mb-1 h-0.5 w-[84px] border-t-2 border-dotted border-[#bdbdbd]" />
            {SIDE_GROUPS.map((group, i) => (
              <div key={i}>
                {i > 0 && <div className="mt-0.5 mb-[5px] ml-0.5 h-px w-20 bg-[#8c8c8c]" />}
                <div className="flex w-[84px] flex-wrap">
                  {group.map(name => (
                    <ToolButton key={name} name={name} active={tool === name} onSelect={setTool} />
                  ))}
                </div>
              </div>
            ))}
          </div>
        </div>

        <div className="relative min-w-0 flex-1 overflow-hidden border-t-2 border-l border-[#6c6c6c] bg-[#cdcdcb]">
          <Model />
          <KeyOverlay />
        </div>

        <Tray />

        <div className="pointer-events-none absolute bottom-0 left-0 h-[73px] w-[1310px] bg-black/42" />
      </main>

      <StatusBar />
    </div>
  );
}
